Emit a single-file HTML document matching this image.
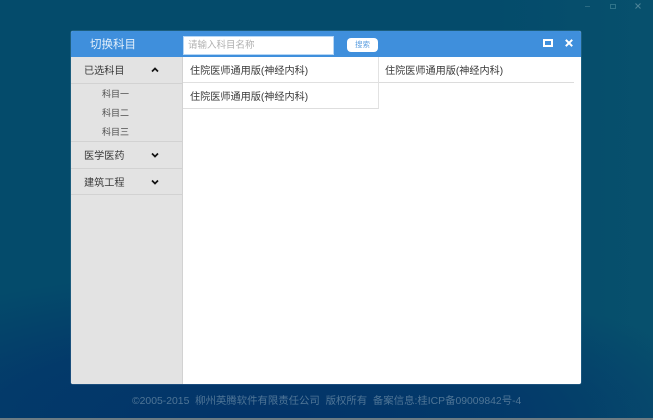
<!DOCTYPE html>
<html><head><meta charset="utf-8"><style>
*{box-sizing:border-box;margin:0;padding:0}
html,body{width:653px;height:420px;overflow:hidden}
body{position:relative;background:#044b6b;font-family:"Liberation Sans","Noto Sans CJK SC",sans-serif}
.a{position:absolute;white-space:nowrap}
.bg2{left:0;top:0;width:653px;height:420px;background:radial-gradient(ellipse 480px 150px at 260px 420px,rgba(3,50,105,.95) 0%,rgba(3,52,105,.75) 55%,rgba(4,75,107,0) 100%),linear-gradient(90deg,rgba(4,70,105,0) 75%,rgba(12,88,112,.4) 100%)}
.t{font-size:10.15px;color:#383838;line-height:14px;filter:blur(.3px)}
.s{font-size:9px;color:#4d4d4d;line-height:12px;filter:blur(.3px)}
.hl{background:#d2d2d2;height:1px}
</style></head><body>
<div class="a bg2"></div>
<div class="a" style="left:0;top:418px;width:653px;height:2px;background:#6d7c84"></div>
<div class="a" style="left:71px;top:31px;width:510px;height:353px;background:#fff;border-radius:2px;overflow:hidden;box-shadow:0 0 1px #9fc3e8">
<div class="a" style="left:0;top:0;width:510px;height:26px;background:#3f8fdc"></div>
<div class="a" style="left:0;top:26px;width:112px;height:327px;background:#e3e3e3;border-right:1px solid #d2d2d2"></div>
</div>
<div class="a" style="left:90px;top:38px;font-size:11.5px;line-height:15px;color:#e4f0fb;filter:blur(.3px)">切换科目</div>
<div class="a" style="left:183px;top:36px;width:151px;height:19px;background:#fff;border:1px solid #b5d6f5"></div>
<div class="a" style="left:188px;top:39px;font-size:9.5px;line-height:13px;color:#b0b0b0;filter:blur(.3px)">请输入科目名称</div>
<div class="a" style="left:347px;top:38px;width:31px;height:14px;background:#fff;border-radius:4px"></div>
<div class="a" style="left:355px;top:40px;font-size:7.5px;line-height:10px;color:#5d9fe0;filter:blur(.3px)">搜索</div>
<div class="a" style="left:543px;top:39px;width:10px;height:8px;border:2px solid #fff"></div>
<svg class="a" style="left:565px;top:39px" width="8" height="8" viewBox="0 0 8 8"><path d="M.8 .8L7.2 7.2M7.2 .8L.8 7.2" stroke="#fff" stroke-width="2" fill="none"/></svg>

<div class="a t" style="left:84px;top:64.500px">已选科目</div>
<svg class="a" style="left:151px;top:67px" width="8" height="6" viewBox="0 0 8 6"><path d="M1 4.5L4 1.5L7 4.5" stroke="#111" stroke-width="1.7" fill="none"/></svg>
<div class="a hl" style="left:71px;top:83px;width:112px"></div>
<div class="a s" style="left:102px;top:88px">科目一</div>
<div class="a s" style="left:102px;top:107px">科目二</div>
<div class="a s" style="left:102px;top:126px">科目三</div>
<div class="a hl" style="left:71px;top:141px;width:112px"></div>
<div class="a t" style="left:84px;top:150px">医学医药</div>
<svg class="a" style="left:151px;top:152px" width="8" height="6" viewBox="0 0 8 6"><path d="M1 1.5L4 4.5L7 1.5" stroke="#111" stroke-width="1.7" fill="none"/></svg>
<div class="a hl" style="left:71px;top:168px;width:112px"></div>
<div class="a t" style="left:84px;top:176.500px">建筑工程</div>
<svg class="a" style="left:151px;top:179px" width="8" height="6" viewBox="0 0 8 6"><path d="M1 1.5L4 4.5L7 1.5" stroke="#111" stroke-width="1.7" fill="none"/></svg>
<div class="a hl" style="left:71px;top:194px;width:112px"></div>

<div class="a" style="left:183px;top:57px;width:196px;height:52px;border-right:1px solid #e2e2e2;border-bottom:1px solid #dedede"></div>
<div class="a" style="left:183px;top:82px;width:196px;height:1px;background:#e0e0e0"></div>
<div class="a" style="left:379px;top:82px;width:195px;height:1px;background:#dcdcdc"></div>
<div class="a t" style="left:190px;top:64.500px">住院医师通用版(神经内科)</div>
<div class="a t" style="left:190px;top:90.500px">住院医师通用版(神经内科)</div>
<div class="a t" style="left:385px;top:64.500px">住院医师通用版(神经内科)</div>

<div class="a" style="left:132px;top:395px;font-size:10.4px;line-height:14px;color:#4f7596;filter:blur(.3px)">©2005-2015&nbsp; 柳州英腾软件有限责任公司&nbsp; 版权所有&nbsp; 备案信息:桂ICP备09009842号-4</div>

<div class="a" style="left:585px;top:6px;width:5px;height:1px;background:#2a6a82"></div>
<div class="a" style="left:610px;top:4px;width:6px;height:5px;border:1px solid #2f7389"></div>
<svg class="a" style="left:635px;top:3px" width="6" height="6" viewBox="0 0 6 6"><path d="M.5 .5L5.500 5.500M5.500 .5L.5 5.500" stroke="#4c8397" stroke-width="1.1" fill="none"/></svg>
</body></html>
